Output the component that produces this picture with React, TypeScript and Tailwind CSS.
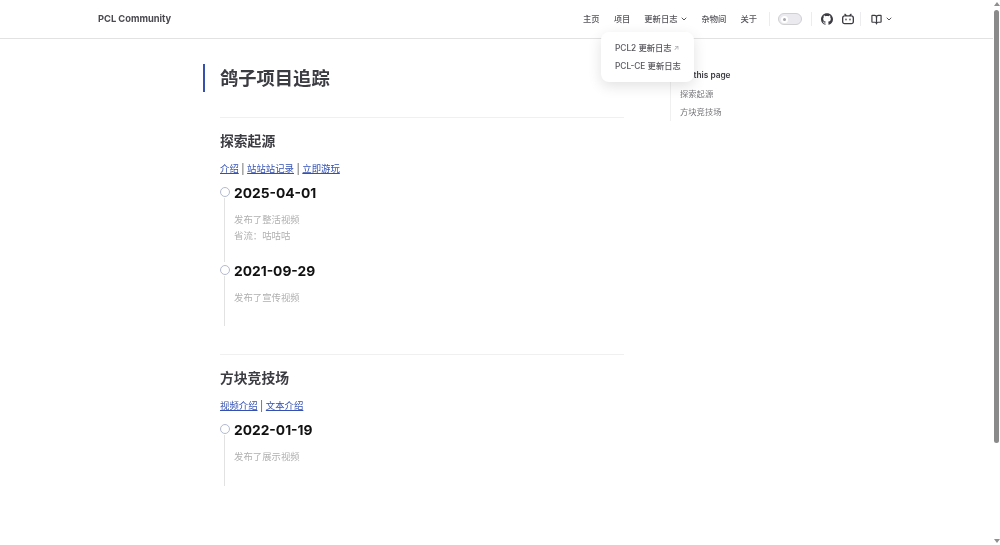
import React from "react";
import { SiGithub, SiBilibili } from "react-icons/si";
import { BookOpen, ChevronDown } from "lucide-react";

const font = "font-['Inter','Noto_Sans_CJK_SC',sans-serif]";

function Entry({ date, lines, gap }: { date: string; lines: string[]; gap: string }) {
  return (
    <div className={`relative ${gap}`}>
      <div className="absolute left-[-0.5px] top-[3px] h-[10px] w-[10px] rounded-full border border-[#b4bad0] bg-white" />
      <div className="absolute left-[4px] top-[14px] bottom-0 w-px bg-[#e2e2e3]" />
      <div className="pl-[14px]">
        <div className="h-[18px] text-[13.8px] font-bold leading-[18px] text-[#111111]">{date}</div>
        <div className="pt-[10px]">
          {lines.map((l) => (
            <div key={l} className="h-[16px] text-[9.4px] leading-[16px] text-[#b0b0b0]">{l}</div>
          ))}
        </div>
      </div>
    </div>
  );
}

function Section({ title, links, children }: { title: string; links: string[]; children: React.ReactNode }) {
  return (
    <section>
      <div className="border-t border-[#f0f0f1] pt-[13px]">
        <h2 className="h-[20px] text-[13.8px] font-bold leading-[20px] text-[#3c3c43]">{title}</h2>
        <div className="mt-[11px] flex h-[14px] items-center text-[9.4px] leading-[14px] text-[#3c3c43]">
          {links.map((l, i) => (
            <React.Fragment key={l}>
              {i > 0 && <span className="mx-[2.5px] text-[10px] text-[#555]">|</span>}
              <span className="text-[#3451b2] underline">{l}</span>
            </React.Fragment>
          ))}
        </div>
        {children}
      </div>
    </section>
  );
}

function Nav({ children, className = "" }: { children: React.ReactNode; className?: string }) {
  return <span className={`block text-[8.3px] font-medium leading-[12px] text-[#55555b] ${className}`}>{children}</span>;
}

export default function App() {
  return (
    <div className={`${font} relative h-[545px] w-[1000px] overflow-hidden bg-white blur-[0.35px]`}>
      <div className="w-[993px]">
        <header className="flex h-[39px] items-center border-b border-[#e2e2e3] pl-[98px] pr-[100px]">
          <span className="text-[9.3px] font-bold text-[#4a4a50]">PCL Community</span>
          <div className="ml-auto flex items-center">
            <div className="flex items-center gap-[14px]">
              <Nav>主页</Nav>
              <Nav>项目</Nav>
              <div className="flex items-center gap-[3px]">
                <Nav>更新日志</Nav>
                <ChevronDown size={8} strokeWidth={3} className="text-[#55555b]" />
              </div>
              <Nav className="-ml-[1px]">杂物间</Nav>
              <Nav>关于</Nav>
            </div>
            <div className="ml-[12px] h-[14px] w-px bg-[#ececee]" />
            <div className="ml-[8px] flex h-[12px] w-[24px] items-center rounded-full border border-[#d0d0d3] bg-[#ebebef] pl-[2px]">
              <div className="flex h-[7px] w-[7px] items-center justify-center rounded-full bg-white">
                <div className="h-[3px] w-[3px] rounded-full bg-[#a8a8ac]" />
              </div>
            </div>
            <div className="ml-[9px] h-[14px] w-px bg-[#ececee]" />
            <SiGithub size={12} className="ml-[9px] text-[#3c3c43]" />
            <SiBilibili size={12} className="ml-[9px] text-[#3c3c43]" />
            <div className="ml-[6px] h-[14px] w-px bg-[#ececee]" />
            <BookOpen size={11} strokeWidth={2.6} className="ml-[10px] text-[#3c3c43]" />
            <ChevronDown size={8} strokeWidth={3} className="ml-[3px] text-[#55555b]" />
          </div>
        </header>

        <div className="flex pl-[203px] pt-[25px]">
          <main className="w-[421px]">
            <h1 className="flex h-[28px] items-center border-l-2 border-[#3451b2] pl-[15px] pt-[2px] text-[18.3px] font-bold text-[#3c3c43]">
              鸽子项目追踪
            </h1>
            <div className="pl-[17px]">
              <div className="mt-[25px]">
                <Section title="探索起源" links={["介绍", "站站站记录", "立即游玩"]}>
                  <div className="pt-[8px]">
                    <Entry date="2025-04-01" lines={["发布了整活视频", "省流：咕咕咕"]} gap="pb-[18px]" />
                    <Entry date="2021-09-29" lines={["发布了宣传视频"]} gap="pb-[20px]" />
                  </div>
                </Section>
              </div>
              <div className="mt-[27.5px]">
                <Section title="方块竞技场" links={["视频介绍", "文本介绍"]}>
                  <div className="pt-[8px]">
                    <Entry date="2022-01-19" lines={["发布了展示视频"]} gap="pb-[21px]" />
                  </div>
                </Section>
              </div>
            </div>
          </main>
          <aside className="ml-[46px] mt-[3px] h-[54px] w-[100px] border-l border-[#f0f0f1] pl-[9px] pt-[1px]">
            <div className="h-[14px] text-[8.3px] font-semibold leading-[14px] text-[#3c3c43]">On this page</div>
            <div className="mt-[4.5px] h-[14px] text-[8.3px] leading-[14px] text-[#77777c]">探索起源</div>
            <div className="mt-[4.5px] h-[14px] text-[8.3px] leading-[14px] text-[#77777c]">方块竞技场</div>
          </aside>
        </div>
      </div>

      <div className="absolute left-[601px] top-[32px] flex h-[50px] w-[93px] flex-col justify-center gap-[6px] rounded-lg bg-white pl-[14px] shadow-[0_4px_14px_rgba(0,0,0,0.12)]">
        <div className="flex h-[12px] items-center text-[8.3px] font-medium leading-[12px] text-[#55555b]">
          PCL2 更新日志<span className="ml-[2px] text-[7px] text-[#a8a8ae]">↗</span>
        </div>
        <div className="h-[12px] text-[8.3px] font-medium leading-[12px] text-[#55555b]">PCL-CE 更新日志</div>
      </div>

      <div className="absolute right-0 top-0 flex h-[545px] w-[7px] flex-col items-center">
        <svg width="6" height="4" viewBox="0 0 6 4" className="mt-[2px]"><path d="M3 0L6 4H0z" fill="#8f8f8f" /></svg>
        <div className="mt-[4px] h-[433px] w-[5px] rounded-full bg-[#8a8a8a]" />
        <svg width="6" height="4" viewBox="0 0 6 4" className="mt-auto mb-[2px]"><path d="M0 0H6L3 4z" fill="#8f8f8f" /></svg>
      </div>
    </div>
  );
}
